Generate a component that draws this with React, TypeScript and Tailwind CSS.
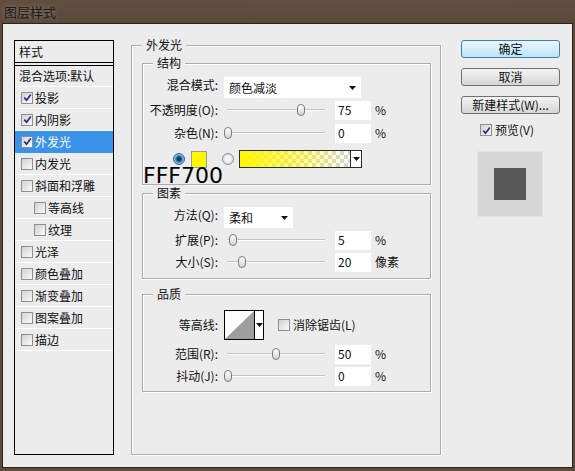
import React from "react";

const Arrow = () => (
  <svg width="7" height="4" viewBox="0 0 7 4">
    <path d="M0 0 H7 L3.5 4 Z" fill="#111" />
  </svg>
);

const Check = ({ on }: { on?: boolean }) => (
  <span className="w-[12px] h-[12px] border border-[#8e8f8f] bg-linear-to-br from-[#d2d2d2] to-[#fafafa] flex items-center justify-center shrink-0">
    {on && (
      <svg width="9" height="9" viewBox="0 0 9 9">
        <path d="M1.2 4.6 L3.6 7.2 L7.8 1.4" stroke="#2b3086" strokeWidth="1.7" fill="none" />
      </svg>
    )}
  </span>
);

const Radio = ({ on }: { on?: boolean }) =>
  on ? (
    <span className="block w-[12px] h-[12px] rounded-full border border-[#2c628b] bg-[radial-gradient(circle,#0f3d60_0_2px,#3b86c0_3px,#c9e6f8_6px)] shrink-0" />
  ) : (
    <span className="block w-[12px] h-[12px] rounded-full border border-[#8e8f8f] bg-[radial-gradient(circle,#f6f6f6_0_2px,#d6d6d6_6px)] shrink-0" />
  );

const Label = ({ children }: { children: React.ReactNode }) => (
  <div className="w-[77px] pr-[2px] text-right shrink-0">{children}</div>
);

const Slider = ({ offset }: { offset: number }) => (
  <div className="relative ml-[4px] w-[102px] h-full flex items-center shrink-0">
    <div className="ml-[3px] w-[98px] h-[2px] border-t border-[#c2c2c2] bg-white" />
    <div
      className="absolute top-1/2 -translate-y-1/2 w-[8px] h-[12px] rounded-[4px] border border-[#7c7c7c] bg-linear-to-b from-white to-[#d4d4d4]"
      style={{ left: offset }}
    />
  </div>
);

const NumBox = ({ v }: { v: string }) => (
  <div className="ml-[9px] w-[36px] h-[19px] bg-white pl-[3px] flex items-center shrink-0">{v}</div>
);

const SliderRow = ({ label, offset, v, unit }: { label: string; offset: number; v: string; unit: string }) => (
  <div className="h-[22px] flex items-center">
    <Label>{label}</Label>
    <Slider offset={offset} />
    <NumBox v={v} />
    <span className="ml-[4px]">{unit}</span>
  </div>
);

const Dropdown = ({ text, w }: { text: string; w: string }) => (
  <div className={`ml-[4px] h-[21px] bg-white flex items-center justify-between pl-[5px] pr-[5px] ${w}`}>
    <span>{text}</span>
    <Arrow />
  </div>
);

const groupBox =
  "border border-[#acacac] shadow-[inset_1px_1px_0_#fff,1px_1px_0_#fff]";

const layers: [string, boolean, boolean][] = [
  ["投影", true, false],
  ["内阴影", true, false],
  ["外发光", true, false],
  ["内发光", false, false],
  ["斜面和浮雕", false, false],
  ["等高线", false, true],
  ["纹理", false, true],
  ["光泽", false, false],
  ["颜色叠加", false, false],
  ["渐变叠加", false, false],
  ["图案叠加", false, false],
  ["描边", false, false],
];

export default function App() {
  return (
    <div className="w-[575px] h-[471px] bg-[#5d4a3b] flex flex-col text-[12px] leading-[16px] text-[#111] font-['Noto_Sans_CJK_SC',sans-serif]">
      {/* title bar */}
      <div className="h-[23px] pl-[4px] flex items-center text-[13px] text-[#1a1a1a] bg-linear-to-b from-[#634f3f] to-[#5a4839] [text-shadow:0_0_5px_rgba(255,255,255,0.35)]">
        图层样式
      </div>

      <div className="mx-[2px] mb-[3px] flex-1 border border-[#29231e] bg-[#ececec] flex items-start">
        {/* styles list */}
        <div className="mt-[16px] ml-[11px] w-[100px] h-[415px] border border-black flex flex-col shrink-0">
          <div className="h-[21px] pl-[4px] flex items-center">样式</div>
          <div className="h-[4px] border-y border-black" />
          <div className="h-[21px] pl-[4px] flex items-center border-b border-white">混合选项:默认</div>
          {layers.map(([name, on, indent], i) => (
            <div
              key={name + i}
              className={`h-[22px] flex items-center gap-[2px] border-b ${
                i === 2 ? "bg-[#3a93e8] text-white border-[#3a93e8]" : "border-white"
              } ${indent ? "pl-[19px]" : "pl-[6px]"}`}
            >
              <Check on={on} />
              <span>{name}</span>
            </div>
          ))}
        </div>

        {/* outer glow */}
        <fieldset className={`mt-[13px] ml-[17px] w-[310px] h-[418px] pl-[10px] pr-[9px] shrink-0 ${groupBox}`}>
          <legend className="px-[4px] bg-[#ececec]">外发光</legend>

          {/* 结构 */}
          <fieldset className={`mt-[2px] pb-[16px] ${groupBox}`}>
            <legend className="ml-[10px] px-[4px] bg-[#ececec]">结构</legend>
            <div className="mt-[6px] h-[22px] flex items-start">
              <Label>混合模式:</Label>
              <Dropdown text="颜色减淡" w="w-[137px]" />
            </div>
            <SliderRow label="不透明度(O):" offset={73} v="75" unit="%" />
            <div className="mt-[1px]">
              <SliderRow label="杂色(N):" offset={0} v="0" unit="%" />
            </div>
            <div className="relative mt-[6px] h-[18px] flex items-center">
              <div className="ml-[30px]">
                <Radio on />
              </div>
              <div className="ml-[6px] w-[16px] h-[17px] border border-[#9a9a9a] bg-[#fff700]" />
              <div className="ml-[15px]">
                <Radio />
              </div>
              <div className="ml-[5px] w-[123px] h-[18px] border border-[#2b2b2b] flex">
                <div className="flex-1 bg-[repeating-conic-gradient(#d6d6d6_0_25%,#ffffff_0_50%)] bg-[length:8px_8px]">
                  <div className="h-full bg-linear-to-r from-[#fff700] via-[#fff70088] to-[#fff70000]" />
                </div>
                <div className="w-[11px] border-l border-[#2b2b2b] bg-white flex items-center justify-center">
                  <Arrow />
                </div>
              </div>
              <div className="absolute left-0 top-[18px] text-[22px] leading-[16px] text-black font-['DejaVu_Sans',sans-serif]">
                FFF700
              </div>
            </div>
          </fieldset>

          {/* 图素 */}
          <fieldset className={`mt-[0px] pb-[5px] ${groupBox}`}>
            <legend className="ml-[10px] px-[4px] bg-[#ececec]">图素</legend>
            <div className="mt-[6px] h-[22px] flex items-start">
              <Label>方法(Q):</Label>
              <Dropdown text="柔和" w="w-[69px]" />
            </div>
            <SliderRow label="扩展(P):" offset={5} v="5" unit="%" />
            <SliderRow label="大小(S):" offset={14} v="20" unit="像素" />
          </fieldset>

          {/* 品质 */}
          <fieldset className={`mt-[7px] pb-[4px] ${groupBox}`}>
            <legend className="ml-[10px] px-[4px] bg-[#ececec]">品质</legend>
            <div className="mt-[8px] h-[30px] flex items-center">
              <Label>等高线:</Label>
              <div className="ml-[4px] w-[40px] h-[30px] border border-black bg-white flex">
                <svg width="29" height="28" viewBox="0 0 29 28" className="shrink-0">
                  <polygon points="0,28 29,0 29,28" fill="#9d9d9d" />
                </svg>
                <div className="flex-1 border-l border-black flex items-center justify-center">
                  <Arrow />
                </div>
              </div>
              <div className="ml-[14px] flex items-center gap-[3px]">
                <Check />
                <span>消除锯齿(L)</span>
              </div>
            </div>
            <div className="mt-[3px]">
              <SliderRow label="范围(R):" offset={48} v="50" unit="%" />
            </div>
            <SliderRow label="抖动(J):" offset={0} v="0" unit="%" />
          </fieldset>
        </fieldset>

        {/* buttons */}
        <div className="mt-[16px] ml-[20px] w-[99px] flex flex-col shrink-0">
          <div className="h-[18px] rounded-[3px] border border-[#3c7fb1] bg-linear-to-b from-[#eaf6fd] to-[#bde4f8] flex items-center justify-center">
            确定
          </div>
          <div className="mt-[10px] h-[18px] rounded-[3px] border border-[#707070] bg-linear-to-b from-[#f4f4f4] to-[#d6d6d6] flex items-center justify-center">
            取消
          </div>
          <div className="mt-[10px] h-[18px] rounded-[3px] border border-[#707070] bg-linear-to-b from-[#f4f4f4] to-[#d6d6d6] flex items-center justify-center">
            新建样式(W)...
          </div>
          <div className="mt-[8px] pl-[19px] h-[16px] flex items-center gap-[3px]">
            <Check on />
            <span>预览(V)</span>
          </div>
          <div className="mt-[13px] ml-[16px] w-[66px] h-[66px] border border-[#e4e4e4] bg-[#d6d6d6] flex items-center justify-center">
            <div className="w-[32px] h-[32px] bg-[#585858]" />
          </div>
        </div>
      </div>
    </div>
  );
}
